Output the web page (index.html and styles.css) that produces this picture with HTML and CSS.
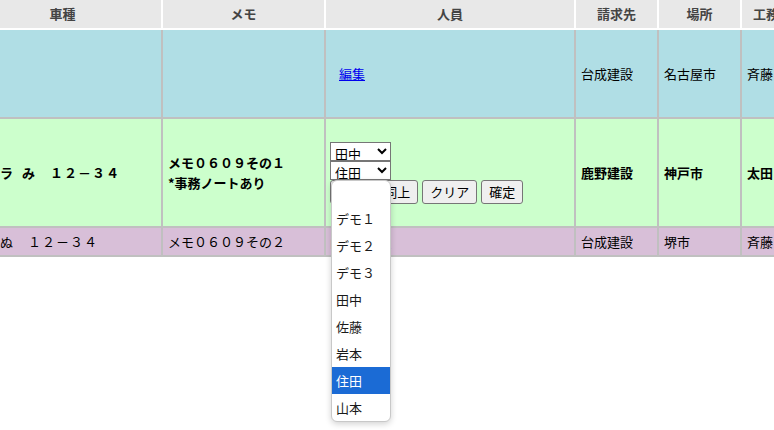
FILE: index.html
```html
<!DOCTYPE html>
<html lang="ja">
<head>
<meta charset="utf-8">
<title>配車表</title>
<link rel="stylesheet" href="styles.css">
</head>
<body>
<div class="viewport">
  <table class="grid">
    <thead>
      <tr class="head">
        <th class="c-car">車種</th>
        <th class="c-memo">メモ</th>
        <th class="c-staff">人員</th>
        <th class="c-bill">請求先</th>
        <th class="c-place">場所</th>
        <th class="c-koumu">工務</th>
      </tr>
    </thead>
    <tbody>
      <tr class="row-blue">
        <td class="car"></td>
        <td></td>
        <td class="staff"><a href="#" class="edit">編集</a></td>
        <td>台成建設</td>
        <td>名古屋市</td>
        <td>斉藤</td>
      </tr>
      <tr class="row-green">
        <td class="car">軽トラ み　１２－３４</td>
        <td>メモ０６０９その１<br>*事務ノートあり</td>
        <td class="staff">
          <div class="picker">
            <select class="sel">
              <option></option>
              <option>デモ１</option>
              <option>デモ２</option>
              <option>デモ３</option>
              <option selected>田中</option>
              <option>佐藤</option>
              <option>岩本</option>
              <option>住田</option>
              <option>山本</option>
            </select>
            <select class="sel">
              <option></option>
              <option>デモ１</option>
              <option>デモ２</option>
              <option>デモ３</option>
              <option>田中</option>
              <option>佐藤</option>
              <option>岩本</option>
              <option selected>住田</option>
              <option>山本</option>
            </select>
            <div class="popup">
              <div class="opt opt-blank"></div>
              <div class="opt">デモ１</div>
              <div class="opt">デモ２</div>
              <div class="opt">デモ３</div>
              <div class="opt">田中</div>
              <div class="opt">佐藤</div>
              <div class="opt">岩本</div>
              <div class="opt opt-on">住田</div>
              <div class="opt">山本</div>
            </div>
          </div>
          <div class="btns">
            <button class="btn">1つ上と同上</button>
            <button class="btn">クリア</button>
            <button class="btn">確定</button>
          </div>
        </td>
        <td>鹿野建設</td>
        <td>神戸市</td>
        <td>太田</td>
      </tr>
      <tr class="row-purple">
        <td class="car">子いぬ　１２－３４</td>
        <td>メモ０６０９その２</td>
        <td class="staff">山本<a href="#" class="edit">編集</a></td>
        <td>台成建設</td>
        <td>堺市</td>
        <td>斉藤</td>
      </tr>
    </tbody>
  </table>
</div>
</body>
</html>
```

FILE: styles.css
```css
html, body {
  margin: 0;
  padding: 0;
  background: #ffffff;
}

body {
  font-family: "Noto Sans CJK JP", "Noto Sans", sans-serif;
  font-size: 13px;
  color: #000000;
}

.viewport {
  width: 774px;
  height: 430px;
  overflow: hidden;
}

.grid {
  border-collapse: collapse;
  table-layout: fixed;
  width: 828px;
  margin-left: -38px;
}

.grid th {
  box-sizing: border-box;
  height: 29px;
  padding: 0 5px;
  background: #e8e8e8;
  color: #444444;
  font-weight: bold;
  line-height: 20px;
  border: 2px solid #ffffff;
  border-top: 0;
  text-align: center;
  white-space: nowrap;
}

.c-car { width: 199px; }
.c-memo { width: 163px; }
.c-staff { width: 250px; }
.c-bill { width: 83px; }
.c-place { width: 83px; }
.c-koumu { width: 50px; }

.grid td {
  padding: 0 5px;
  border: 2px solid #c0c0c0;
  line-height: 20px;
  vertical-align: middle;
  white-space: nowrap;
  text-align: left;
}

.row-blue { height: 89px; }
.row-blue td { background: #b0dee5; }

.row-green { height: 109px; }
.row-green td { background: #ccffcc; font-weight: bold; }

.row-purple { height: 29px; }
.row-purple td { background: #d8bfd8; }

.grid td.car {
  padding-left: 8px;
  letter-spacing: 1px;
  word-spacing: 4px;
  white-space: pre;
}

.grid td.staff {
  padding: 0 4px;
  font-weight: normal;
}

.edit {
  margin-left: 9px;
  color: #0000ee;
  text-decoration: underline;
}

.picker {
  position: relative;
  width: 61px;
}

.sel {
  display: block;
  box-sizing: border-box;
  width: 61px;
  height: 19px;
  margin: 0;
  font-family: "Noto Sans CJK JP", sans-serif;
  font-size: 13px;
  color: #000;
  background: #ffffff;
}

.popup {
  position: absolute;
  top: 38px;
  left: 1px;
  width: 60px;
  box-sizing: border-box;
  background: #ffffff;
  border: 1px solid #c8c8c8;
  border-radius: 6px;
  box-shadow: 0 2px 6px rgba(0, 0, 0, 0.18);
  overflow: hidden;
  z-index: 5;
}

.opt {
  height: 27px;
  line-height: 27px;
  padding-left: 4px;
  color: #1a1a1a;
  font-size: 13px;
  white-space: nowrap;
}

.opt-blank { height: 24px; }

.opt-on {
  background: #1b6bd5;
  color: #ffffff;
}

.btns {
  display: flex;
  gap: 4px;
}

.btn {
  box-sizing: border-box;
  height: 24px;
  margin: 0;
  padding: 0 7px;
  font-family: "Noto Sans CJK JP", sans-serif;
  font-size: 13px;
  line-height: 20px;
  color: #000;
  background: #efefef;
  border: 1px solid #767676;
  border-radius: 3px;
}
```
